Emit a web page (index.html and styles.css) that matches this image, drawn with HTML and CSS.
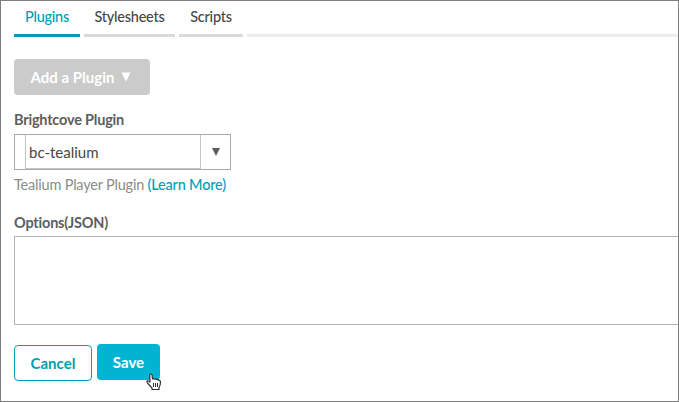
FILE: index.html
```html
<!DOCTYPE html>
<html lang="en">
<head>
<meta charset="utf-8">
<title>Plugins</title>
<link rel="stylesheet" href="styles.css">
</head>
<body>
<main class="panel">
  <nav class="tabs">
    <a class="tab tab-plugins active">Plugins</a>
    <a class="tab tab-styles">Stylesheets</a>
    <a class="tab tab-scripts">Scripts</a>
    <span class="tab-rest"></span>
  </nav>
  <button class="add"><span>Add a Plugin</span><svg width="10" height="10" viewBox="0 0 10 10"><path d="M.5 .5h9L5 9.500z" fill="currentColor"/></svg></button>
  <label class="label plugin-label"><span>Brightcove Plugin</span></label>
  <div class="combo">
    <div class="combo-value"><span>bc-tealium</span></div>
    <div class="combo-arrow"><svg width="8" height="8" viewBox="0 0 8 8"><path d="M0 0h8L4 8z" fill="#5c5c5c"/></svg></div>
  </div>
  <p class="hint"><span>Tealium Player Plugin</span> <a>(Learn More)</a></p>
  <label class="label options-label"><span>Options(JSON)</span></label>
  <div class="options"></div>
  <div class="actions">
    <button class="cancel"><span>Cancel</span></button>
    <button class="save"><span>Save</span>
      <svg class="cursor" width="16" height="18" viewBox="0 0 16 18"><path d="M5.500 14.500 1.500 10Q.3 8.400 1.500 7.900q1-.4 2.500 1.300L3.700 2.500Q3.600 1 4.800 1t1.300 1.500L6.500 6q1.600-.9 2.300.3 1.600-.8 2.300.5 1.700-.5 2.200.8 1.200-.2 1.200 1.300 0 3.200-1.500 5.600V16.500H6V15z" fill="#fff" stroke="#333" stroke-width="1.200" stroke-linejoin="round"/><path d="M7.500 10v4M9.500 10v4M11.500 10v4" stroke="#333" stroke-width="1"/></svg>
    </button>
  </div>
</main>
</body>
</html>
```
FILE: styles.css
```css
* { box-sizing: border-box; }
body { margin: 0; background: #fff; }
.panel {
  height: 402px;
  border: 1px solid #7f7f7f;
  padding-left: 13px;
  overflow: hidden;
  font-family: Lato, sans-serif;
  font-size: 15px;
  font-variant-ligatures: none;
  color: #464646;
}
button { font: inherit; font-weight: 700; padding: 0; border: 0; display: flex; align-items: center; justify-content: center; }
.tabs { display: flex; gap: 4px; height: 36px; }
.tab { border-bottom: 3px solid #dadada; text-align: center; line-height: 31px; font-weight: 500; font-size: 14.500px; letter-spacing: -0.25px; }
.tab-plugins { width: 66px; }
.tab-styles { width: 91px; }
.tab-scripts { width: 64px; }
.tab.active { color: #00a0b4; border-color: #00a0b4; }
.tab-rest { flex: 1; border-bottom: 3px solid #ededed; }
.add { margin-top: 22px; width: 136px; height: 36px; gap: 7px; border-radius: 4px; background: #cbcbcb; color: #fff; padding-right: 2px; }
.label { display: block; color: #5e5e5e; font-weight: 700; font-size: 14.500px; line-height: 20px; letter-spacing: -0.2px; }
.plugin-label { margin-top: 15px; }
.combo { margin-top: 4px; width: 217px; height: 36px; border: 1px solid #aaa; padding-left: 10px; display: flex; }
.combo-value { width: 176px; border: 1px solid #c4c4c4; border-top: 0; padding-left: 3px; line-height: 34px; }
.combo-arrow { flex: 1; display: flex; align-items: center; justify-content: center; }
.hint { margin: 5px 0 0; line-height: 20px; font-size: 14.500px; color: #8c8c8c; letter-spacing: -0.2px; }
.hint a { color: #00a0b4; font-weight: 500; }
.options-label { margin-top: 18px; }
.options { margin-top: 3px; height: 89px; border: 1px solid #b4b4b4; border-right: 0; }
.actions { display: flex; gap: 5px; margin-top: 19px; align-items: flex-start; }
.cancel { width: 78px; height: 36px; margin-top: 1px; border: 1px solid #00a0b4; border-radius: 4px; background: #fff; color: #00a0b4; }
.save { position: relative; width: 63px; height: 36px; border-radius: 4px; background: #00b4d2; color: #fff; }
.cursor { position: absolute; left: 49px; top: 29px; }
```
